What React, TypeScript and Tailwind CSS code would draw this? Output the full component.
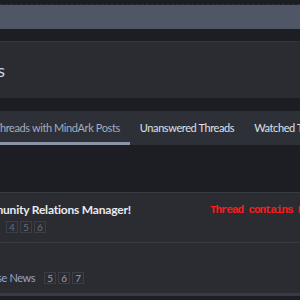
const pageBox =
  "flex h-[12px] w-[12px] items-center justify-center border border-[#3b3e46] text-[10px] leading-none";

function PageLinks({ pages, tone }: { pages: number[]; tone: string }) {
  return (
    <div className="flex gap-[2px]">
      {pages.map((p) => (
        <span key={p} className={`${pageBox} ${tone}`}>
          {p}
        </span>
      ))}
    </div>
  );
}

export default function App() {
  return (
    <div
      className="h-[300px] w-[300px] overflow-hidden bg-[#1d1e23]"
      style={{ fontFamily: 'Lato, "Open Sans", sans-serif' }}
    >
      {/* top nav strip */}
      <div className="h-[5px] border-b border-dashed border-[#2c2e35]" />
      <div className="h-[24px] bg-[#4f5767]" />
      <div className="h-[12px]" />

      {/* page heading */}
      <div className="flex h-[57px] items-center border-t border-[#35373e] bg-[#2a2c32]">
        <h1 className="-ml-[58px] whitespace-nowrap text-[18px] leading-none text-[#c9d3e6]">
          Threads
        </h1>
      </div>

      <div className="h-[13px]" />

      {/* tabs */}
      <div className="flex h-[34px] items-stretch whitespace-nowrap bg-[#2e3038] text-[11px] tracking-[-0.4px]">
        <div className="-ml-[16px] flex items-center border-b-[3px] border-[#8a93a8] px-[10px] pt-[3px] text-[#a4acbe]">
          Threads with MindArk Posts
        </div>
        <div className="flex items-center px-[10px] text-[#dde1ea]">Unanswered Threads</div>
        <div className="flex items-center px-[10px] text-[#dde1ea]">Watched Threads</div>
      </div>

      <div className="h-[47px]" />

      {/* thread list */}
      <div className="border-t border-[#393b42] bg-[#2a2c32]">
        <div className="flex flex-col gap-[3px] pb-[9px] pt-[9px]">
          <div className="flex h-[16px] items-center whitespace-nowrap">
            <span className="-ml-[31px] w-[241px] shrink-0 text-[12px] font-bold leading-[16px] tracking-[-0.2px] text-[#e8eaf0]">
              Community Relations Manager!
            </span>
            <span
              className="text-[11px] font-bold leading-[16px] tracking-[-1.1px] text-[#ff1a1a]"
              style={{ fontFamily: '"Liberation Mono", monospace' }}
            >
              Thread contains MindArk posts
            </span>
          </div>
          <div className="pl-[6px]">
            <PageLinks pages={[4, 5, 6]} tone="text-[#686d7a]" />
          </div>
        </div>

        <div className="border-t border-[#383a42] pb-[8px] pt-[28px]">
          <div className="flex items-center gap-[9px] whitespace-nowrap">
            <span className="-ml-[27px] text-[11px] leading-[14px] tracking-[-0.4px] text-[#9aa4c4]">
              Release News
            </span>
            <PageLinks pages={[5, 6, 7]} tone="text-[#9a9fab]" />
          </div>
        </div>
        <div className="h-[3px] bg-[#383b45]" />
      </div>
    </div>
  );
}
